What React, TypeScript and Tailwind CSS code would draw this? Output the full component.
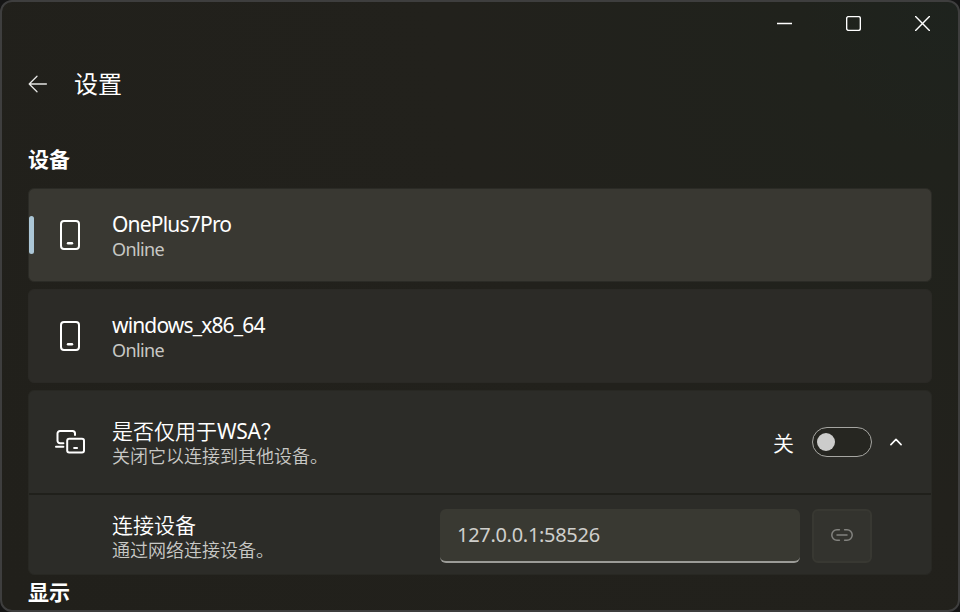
import type { ReactNode } from "react";

function PhoneIcon() {
  return (
    <svg width="20" height="30" viewBox="0 0 20 30" fill="none" stroke="#fff" strokeWidth="2" strokeLinecap="round">
      <rect x="1" y="1" width="18" height="28" rx="3" />
      <path d="M8 23.2h4" strokeWidth="2.4" />
    </svg>
  );
}

function DevicesIcon() {
  return (
    <svg width="30" height="24" viewBox="0 0 30 24" fill="none" stroke="#fff" strokeWidth="2" strokeLinecap="round">
      <path d="M20 5V3.5A2.5 2.5 0 0 0 17.5 1H5A2.5 2.5 0 0 0 2.5 3.5V10.7A2.5 2.5 0 0 0 5 13.2H8.4" />
      <path d="M1 16.7H8.4" />
      <rect x="12.2" y="8.8" width="16.8" height="13.6" rx="2" />
      <path d="M19.2 18h2.8" strokeWidth="2.2" />
    </svg>
  );
}

function Label({ title, sub, titleClass, subClass }: { title: ReactNode; sub: string; titleClass: string; subClass: string }) {
  return (
    <div className="flex flex-col whitespace-nowrap">
      <span className={`h-[26px] text-[21px] leading-[26px] text-white ${titleClass}`}>{title}</span>
      <span className={`h-6 text-[18px] leading-6 text-[#c8c8c5] ${subClass}`}>{sub}</span>
    </div>
  );
}

function DeviceCard({ name, selected, titleClass }: { name: string; selected?: boolean; titleClass: string }) {
  return (
    <div
      className={`flex shrink-0 items-center rounded-[6px] ${
        selected
          ? "h-[94px] border border-[#2b2b26] bg-[#393832]"
          : "h-[94px] border border-[#2a2925] bg-[#2c2b27]"
      }`}
    >
      <div className={`h-[38px] w-[5px] rounded-[2.5px] ${selected ? "bg-[#abc6d6]" : ""}`} />
      <div className="ml-[26px] w-[52px]">
        <PhoneIcon />
      </div>
      <div className="mt-[2px]">
        <Label title={name} sub="Online" titleClass={titleClass} subClass="tracking-[-0.6px]" />
      </div>
    </div>
  );
}

function Heading({ children, className }: { children: ReactNode; className: string }) {
  return <h2 className={`shrink-0 text-[21px] leading-7 font-bold text-white ${className}`}>{children}</h2>;
}

export default function App() {
  return (
    <div className="h-[612px] w-[960px] overflow-hidden bg-[#151515] font-['Noto_Sans','Noto_Sans_CJK_SC',sans-serif]">
      <div className="flex h-full flex-col overflow-hidden rounded-[12px] border-2 border-[#3e3e3e] bg-[radial-gradient(circle_at_100%_0%,#1e231e_0%,#20221c_14%,#22211c_45%,#21201b_100%)]">
        <div className="flex h-[42px] shrink-0 items-center justify-end gap-[54px] pr-7">
          <svg width="15" height="15" viewBox="0 0 15 15" stroke="#fff" strokeWidth="1.5"><path d="M0 7.5h15" /></svg>
          <svg width="15" height="15" viewBox="0 0 15 15" fill="none" stroke="#fff" strokeWidth="1.4"><rect x=".65" y=".65" width="13.7" height="13.7" rx="1.8" /></svg>
          <svg width="15" height="15" viewBox="0 0 15 15" stroke="#fff" strokeWidth="1.4" strokeLinecap="round"><path d="M.6 .6l13.8 13.8M14.4 .6L.6 14.4" /></svg>
        </div>
        <div className="mt-5 flex h-10 shrink-0 items-center pl-[26px]">
          <svg width="20" height="18" viewBox="0 0 20 18" fill="none" stroke="#e4e4e2" strokeWidth="1.3" strokeLinecap="round" strokeLinejoin="round">
            <path d="M18.4 9H1.2M9 1.3L1.2 9L9 16.7" />
          </svg>
          <h1 className="ml-[26px] text-[24px] leading-10 text-white">设置</h1>
        </div>
        <Heading className="mt-[41px] pl-[26px]">设备</Heading>
        <main className="mt-[15px] flex shrink-0 flex-col gap-[7px] pr-[26px] pl-[26px]">
          <DeviceCard name="OnePlus7Pro" selected titleClass="tracking-[-0.8px]" />
          <DeviceCard name="windows_x86_64" titleClass="tracking-[-0.85px]" />
          <section className="flex h-[185px] flex-col overflow-hidden rounded-[6px] border border-[#282823] bg-[#2c2c28]">
            <div className="flex h-[104px] shrink-0 items-center border-b-2 border-[#20201b] pl-[26px]">
              <div className="w-[57px]"><DevicesIcon /></div>
              <div className="mt-[2px] flex-1">
                <Label
                  title={<>是否仅用于<span className="font-normal tracking-[-0.3px]">WSA</span>？</>}
                  sub="关闭它以连接到其他设备。"
                  titleClass="font-[350]"
                  subClass="font-[350]"
                />
              </div>
              <span className="mr-[18px] pt-px text-[21px] leading-7 font-[350] text-white">关</span>
              <div className="flex h-[30px] w-[60px] items-center rounded-full border border-[#a6a6a2] bg-[#262621] pl-1">
                <div className="size-[18px] rounded-full bg-[#cccccb]" />
              </div>
              <svg className="mr-[29px] ml-[18px]" width="12" height="8" viewBox="0 0 12 8" fill="none" stroke="#fff" strokeWidth="1.6" strokeLinecap="round" strokeLinejoin="round">
                <path d="M.9 6.6L6 1.4L11.1 6.6" />
              </svg>
            </div>
            <div className="flex flex-1 items-center pt-[3px] pl-[83px]">
              <div className="mt-[1px] w-[328px]">
                <Label title="连接设备" sub="通过网络连接设备。" titleClass="font-[350]" subClass="font-[350]" />
              </div>
              <div className="flex h-[54px] w-[360px] items-center rounded-[6px] border-b-2 border-[#9b9b97] bg-[#393932] pl-[17px] text-[20px] tracking-[-0.3px] text-[#cfcfcc]">
                127.0.0.1:58526
              </div>
              <div className="ml-3 flex h-[54px] w-[60px] items-center justify-center rounded-[6px] border-2 border-[#383832] bg-[#33332e] pb-[2px]">
                <svg width="22" height="12" viewBox="0 0 22 12" fill="none" stroke="#83837f" strokeWidth="1.5" strokeLinecap="round">
                  <path d="M8.4 .8H6a5.2 5.2 0 0 0 0 10.4h2.4M13.6 .8h2.4a5.2 5.2 0 0 1 0 10.4h-2.4M6 6h10" />
                </svg>
              </div>
            </div>
          </section>
        </main>
        <Heading className="mt-[3px] pl-[26px]">显示</Heading>
      </div>
    </div>
  );
}
